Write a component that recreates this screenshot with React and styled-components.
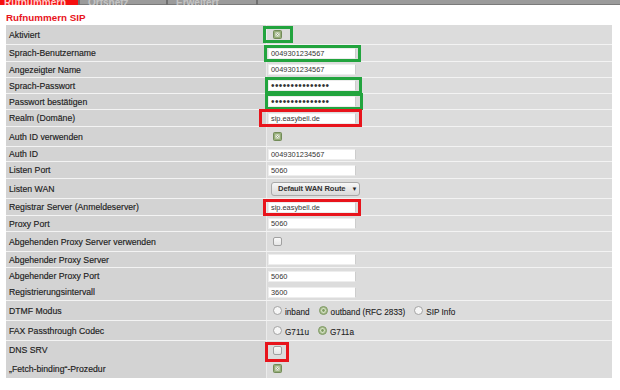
import React from "react"
import styled, { createGlobalStyle } from "styled-components"

const GREEN = "#22a43e"
const RED = "#e8141c"

const Global = createGlobalStyle`
  html, body {
    margin: 0;
    padding: 0;
    background: #fff;
  }
  body {
    font-family: "Liberation Sans", Arial, sans-serif;
  }
`

const Page = styled.div`
  width: 620px;
  height: 390px;
  overflow: hidden;
  background: #fff;
`

const TabStrip = styled.div`
  display: flex;
  gap: 2px;
  height: 5px;
  overflow: hidden;
  background: #707070;
`

const Tab = styled.div`
  flex: ${(p) => (p.$w ? `0 0 ${p.$w}px` : "1 1 auto")};
  display: flex;
  align-items: flex-end;
  padding-left: ${(p) => (p.$active ? 4 : 8)}px;
  background: ${(p) => (p.$active ? "#f50f0f" : "#9b9b9b")};
  border-bottom: 1px solid ${(p) => (p.$active ? "#f50f0f" : "#7a7a7a")};
  box-sizing: border-box;
  color: ${(p) => (p.$active ? "#ffd0d0" : "#c4c4c4")};
  font-size: 10px;
  font-weight: bold;
  line-height: 8px;
  white-space: nowrap;
  span {
    margin-bottom: -3px;
  }
`

const Heading = styled.h2`
  margin: 0;
  padding: 7px 6px 0;
  height: 18px;
  box-sizing: border-box;
  color: ${RED};
  font-size: 9.8px;
  font-weight: bold;
  line-height: 11px;
`

const Table = styled.div`
  margin: 2px 8px 0 6px;
  display: flex;
  flex-direction: column;
`

const Row = styled.div`
  display: grid;
  grid-template-columns: 260px 1fr;
  height: ${(p) => p.$h}px;
  border-top: ${(p) => (p.$joined ? "0" : "1px solid #f3f3f3")};
  &:first-child {
    border-top: 0;
  }
`

const Label = styled.div`
  display: flex;
  align-items: center;
  padding-left: 3px;
  background: #d3d3d3;
  color: #1c1c1c;
  font-size: 8.7px;
  -webkit-text-stroke: 0.15px #1c1c1c;
  white-space: nowrap;
`

const Value = styled.div`
  display: flex;
  align-items: center;
  padding-left: 1px;
  background: #dcdcdc;
  border-left: 1px solid #ebebeb;
  font-size: 8.2px;
  color: #1c1c1c;
  -webkit-text-stroke: 0.1px #1c1c1c;
`

const Field = styled.span`
  display: block;
  width: 88px;
  height: 11px;
  box-sizing: border-box;
  padding-left: 2px;
  background: #fff;
  border: 1px solid #ededed;
  border-right-color: #cdcdcd;
  color: #333;
  font-size: ${(p) => (p.$dots ? 10 : 7.4)}px;
  letter-spacing: ${(p) => (p.$dots ? 0.4 : 0)}px;
  line-height: 9px;
  white-space: nowrap;
  overflow: hidden;
  -webkit-text-stroke: 0;
`

const Mark = styled.span`
  display: inline-flex;
  align-items: center;
  border: 3px solid ${(p) => p.$color};
  padding: ${(p) => `${p.$t}px ${p.$r}px ${p.$b}px ${p.$l}px`};
  margin: ${(p) => `-${p.$t + 3}px -${p.$r + 3}px -${p.$b + 3}px -${p.$l + 3}px`};
  position: relative;
  z-index: 1;
`

const Box = styled.svg`
  display: block;
  margin-left: 5px;
  flex: none;
`

const Select = styled.div`
  display: flex;
  align-items: center;
  gap: 6px;
  margin-left: 3px;
  width: 89px;
  height: 14px;
  box-sizing: border-box;
  padding-left: 6px;
  border: 1px solid #a9a9a9;
  border-radius: 3px;
  background: linear-gradient(#f7f7f7, #dadada);
  color: #333;
  font-size: 7.6px;
  font-weight: bold;
  letter-spacing: -0.1px;
  white-space: nowrap;
  -webkit-text-stroke: 0;
`

const Arrow = styled.span`
  font-size: 6px;
  color: #222;
`

const Options = styled.div`
  display: flex;
  align-items: center;
  margin-left: 5px;
  gap: 9px;
`

const Option = styled.label`
  display: inline-flex;
  align-items: center;
  gap: 3px;
  white-space: nowrap;
  padding-top: 3px;
  svg {
    margin-top: -4px;
  }
`

const CheckBox = ({ checked }) => (
  <Box width="9" height="9" viewBox="0 0 9 9">
    {checked ? (
      <>
        <rect x="0.5" y="0.5" width="8" height="8" rx="1" fill="#95ad78" stroke="#728b58" />
        <rect x="2.5" y="2.5" width="4" height="4" fill="#eef2e6" />
        <path d="M3.3 3.3 L5.7 5.7 M5.7 3.3 L3.3 5.7" stroke="#8a9c72" strokeWidth="0.8" />
      </>
    ) : (
      <>
        <defs>
          <linearGradient id="cb" x1="0" y1="0" x2="0" y2="1">
            <stop offset="0" stopColor="#fbfbfb" />
            <stop offset="1" stopColor="#e4e4e4" />
          </linearGradient>
        </defs>
        <rect x="0.5" y="0.5" width="8" height="8" rx="1.5" fill="url(#cb)" stroke="#a0a0a0" />
      </>
    )}
  </Box>
)

const Radio = ({ checked }) => (
  <svg width="9" height="9" viewBox="0 0 9 9">
    {checked ? (
      <>
        <circle cx="4.5" cy="4.5" r="4" fill="#a8bd8e" stroke="#7f9965" />
        <circle cx="4.5" cy="4.5" r="2.2" fill="#e9f0df" />
        <circle cx="4.5" cy="4.5" r="1.4" fill="#7c9a5e" />
      </>
    ) : (
      <circle cx="4.5" cy="4.5" r="4" fill="#f6f6f6" stroke="#a3a3a3" />
    )}
  </svg>
)

const dots = "\u2022".repeat(15)

const rows = [
  { label: "Aktiviert", h: 19, check: true, mark: [GREEN, 1, 8, 1, 2] },
  { label: "Sprach-Benutzername", h: 16, text: "0049301234567", mark: [GREEN, 0, 2, 0, 1] },
  { label: "Angezeigter Name", h: 15, text: "0049301234567" },
  { label: "Sprach-Passwort", h: 15, pass: true, mark: [GREEN, 0, 3, 0, 0] },
  { label: "Passwort bestätigen", h: 15, pass: true, mark: [GREEN, 0, 4, 0, 0] },
  { label: "Realm (Domäne)", h: 16, text: "sip.easybell.de", mark: [RED, 1, 3, 0, 6] },
  { label: "Auth ID verwenden", h: 19, check: true },
  { label: "Auth ID", h: 14, text: "0049301234567" },
  { label: "Listen Port", h: 16, text: "5060" },
  { label: "Listen WAN", h: 19, select: "Default WAN Route" },
  { label: "Registrar Server (Anmeldeserver)", h: 16, text: "sip.easybell.de", mark: [RED, 0, 2, 0, 2] },
  { label: "Proxy Port", h: 15, text: "5060" },
  { label: "Abgehenden Proxy Server verwenden", h: 19, check: false },
  { label: "Abgehender Proxy Server", h: 15, text: "" },
  { label: "Abgehender Proxy Port", h: 16, text: "5060" },
  { label: "Registrierungsintervall", h: 16, text: "3600", joined: true },
  { label: "DTMF Modus", h: 19, radios: [["inband", false], ["outband (RFC 2833)", true], ["SIP Info", false]] },
  { label: "FAX Passthrough Codec", h: 19, radios: [["G711u", false], ["G711a", true]] },
  { label: "DNS SRV", h: 18, check: false, mark: [RED, 1, 4, 4, 0] },
  { label: "„Fetch-binding“-Prozedur", h: 19, check: true, joined: true },
]

const renderControl = (row) => {
  if (row.pass) return <Field $dots>{dots}</Field>
  if (row.text !== undefined) return <Field>{row.text}</Field>
  if (row.select)
    return (
      <Select>
        {row.select}
        <Arrow>▼</Arrow>
      </Select>
    )
  if (row.radios)
    return (
      <Options>
        {row.radios.map(([name, on]) => (
          <Option key={name}>
            <Radio checked={on} />
            {name}
          </Option>
        ))}
      </Options>
    )
  return <CheckBox checked={row.check} />
}

const SettingRow = ({ row }) => {
  const control = renderControl(row)
  let content = control
  if (row.mark) {
    const [color, t, r, b, l] = row.mark
    content = (
      <Mark $color={color} $t={t} $r={r} $b={b} $l={l}>
        {control}
      </Mark>
    )
  }
  return (
    <Row $h={row.h} $joined={row.joined}>
      <Label>{row.label}</Label>
      <Value>{content}</Value>
    </Row>
  )
}

const App = () => (
  <Page>
    <Global />
    <TabStrip>
      <Tab $active $w={78}>
        <span>Rufnummern</span>
      </Tab>
      <Tab $w={86}>
        <span>Ortsnetz</span>
      </Tab>
      <Tab $w={88}>
        <span>Erweitert</span>
      </Tab>
      <Tab />
    </TabStrip>
    <Heading>Rufnummern SIP</Heading>
    <Table>
      {rows.map((row) => (
        <SettingRow key={row.label} row={row} />
      ))}
    </Table>
  </Page>
)

export default App
